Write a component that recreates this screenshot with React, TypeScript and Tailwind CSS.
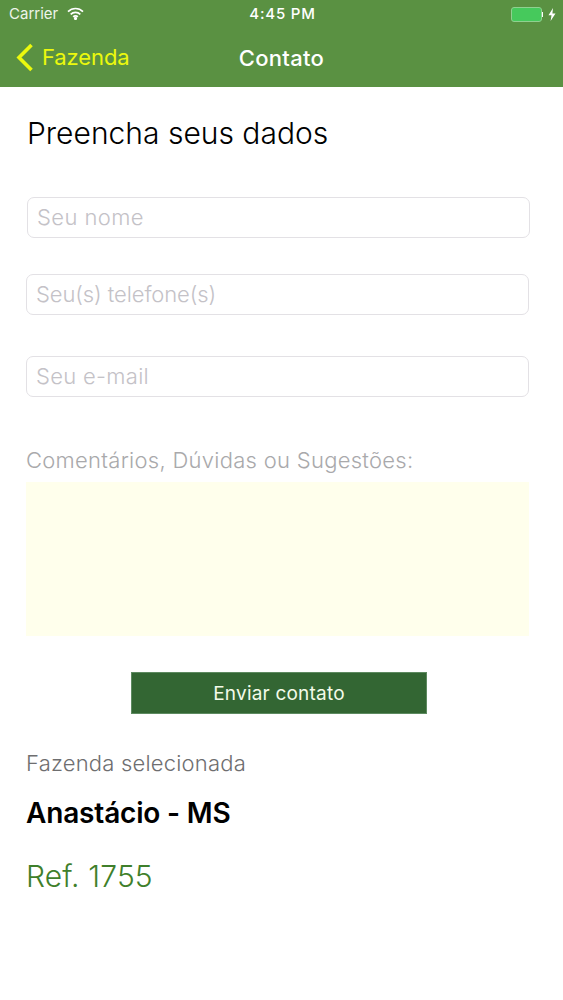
import React from "react";

const fieldClass =
  "block h-[41px] w-[503px] rounded-[7px] border border-[#e3e1e5] bg-white pb-[2px] pl-[9px] text-[22px] font-light text-black outline-none placeholder:text-[#c4c2c7]";

const App: React.FC = () => {
  return (
    <div className="flex h-[1000px] w-[563px] flex-col overflow-hidden bg-white font-['Inter',sans-serif]">
      <header className="h-[87px] shrink-0 bg-[#5a9142] text-white">
        <div className="flex h-[29px] items-center justify-between pl-[9px] pr-[7px]">
          <div className="flex w-[120px] items-center gap-[9px] text-[15px] text-[#eef4ea]">
            <span>Carrier</span>
            <svg width="17" height="13" viewBox="0 0 17 13" fill="none" stroke="white" strokeWidth="1.7" className="-mt-[3px]">
              <path d="M1 4.6a10.6 10.6 0 0 1 15 0" />
              <path d="M3.7 7.4a6.8 6.8 0 0 1 9.6 0" />
              <path d="M6.2 9.9a3.2 3.2 0 0 1 4.6 0" />
              <circle cx="8.5" cy="11.4" r="0.8" fill="white" />
            </svg>
          </div>
          <span className="text-[15px] font-medium tracking-[0.8px]">4:45 PM</span>
          <div className="flex w-[120px] items-center justify-end gap-[5px]">
            <div className="flex items-center">
              <div className="h-[15px] w-[31px] rounded-[3px] border border-[#8fd08f] bg-[#46c95c]" />
              <div className="h-[5px] w-[1px] bg-white" />
            </div>
            <svg width="8" height="13" viewBox="0 0 8 13" fill="white">
              <path d="M5 0 0.5 7.2h3L2.6 13 7.5 5.4h-3.1z" />
            </svg>
          </div>
        </div>
        <div className="relative flex h-[58px] items-center justify-center">
          <div className="absolute left-[16px] top-[14px] flex items-center gap-[8px] text-[#ebf90d]">
            <svg width="18" height="29" viewBox="0 0 18 29" fill="none" stroke="currentColor" strokeWidth="3.6">
              <path d="M15.5 2 3 14.5 15.5 27" />
            </svg>
            <span className="text-[22px] leading-[29px] tracking-[-0.1px]">Fazenda</span>
          </div>
          <h1 className="text-[22px] font-medium tracking-[0.3px]">Contato</h1>
        </div>
      </header>

      <main className="flex flex-col pl-[26px]">
        <h2 className="ml-px mt-[27px] text-[30px] font-light leading-[38px] text-black">Preencha seus dados</h2>
        <input className={`${fieldClass} ml-px mt-[45px] tracking-[0.4px]`} placeholder="Seu nome" />
        <input className={`${fieldClass} mt-[36px] tracking-[-0.1px]`} placeholder="Seu(s) telefone(s)" />
        <input className={`${fieldClass} mt-[41px] tracking-[0.3px]`} placeholder="Seu e-mail" />
        <label className="mt-[49px] text-[22px] font-light leading-[28px] tracking-[0.28px] text-[#a9a9ab]">
          Comentários, Dúvidas ou Sugestões:
        </label>
        <textarea className="mt-[8px] block h-[154px] w-[503px] resize-none bg-[#ffffec] outline-none" />
        <button className="ml-[105px] mt-[36px] h-[42px] w-[296px] border border-[#5d8a60] bg-[#336633] pt-[2px] text-[19px] tracking-[0.2px] text-[#f3fbe9]">
          Enviar contato
        </button>
        <p className="mt-[35px] text-[22px] font-light leading-[28px] tracking-[0.2px] text-[#6e6e70]">Fazenda selecionada</p>
        <p className="mt-[18px] text-[28px] font-semibold leading-[36px] tracking-[-0.17px] text-black">Anastácio - MS</p>
        <p className="mt-[26px] text-[30px] font-light leading-[38px] tracking-[0.15px] text-[#3f7f2b]">Ref. 1755</p>
      </main>
    </div>
  );
};

export default App;
